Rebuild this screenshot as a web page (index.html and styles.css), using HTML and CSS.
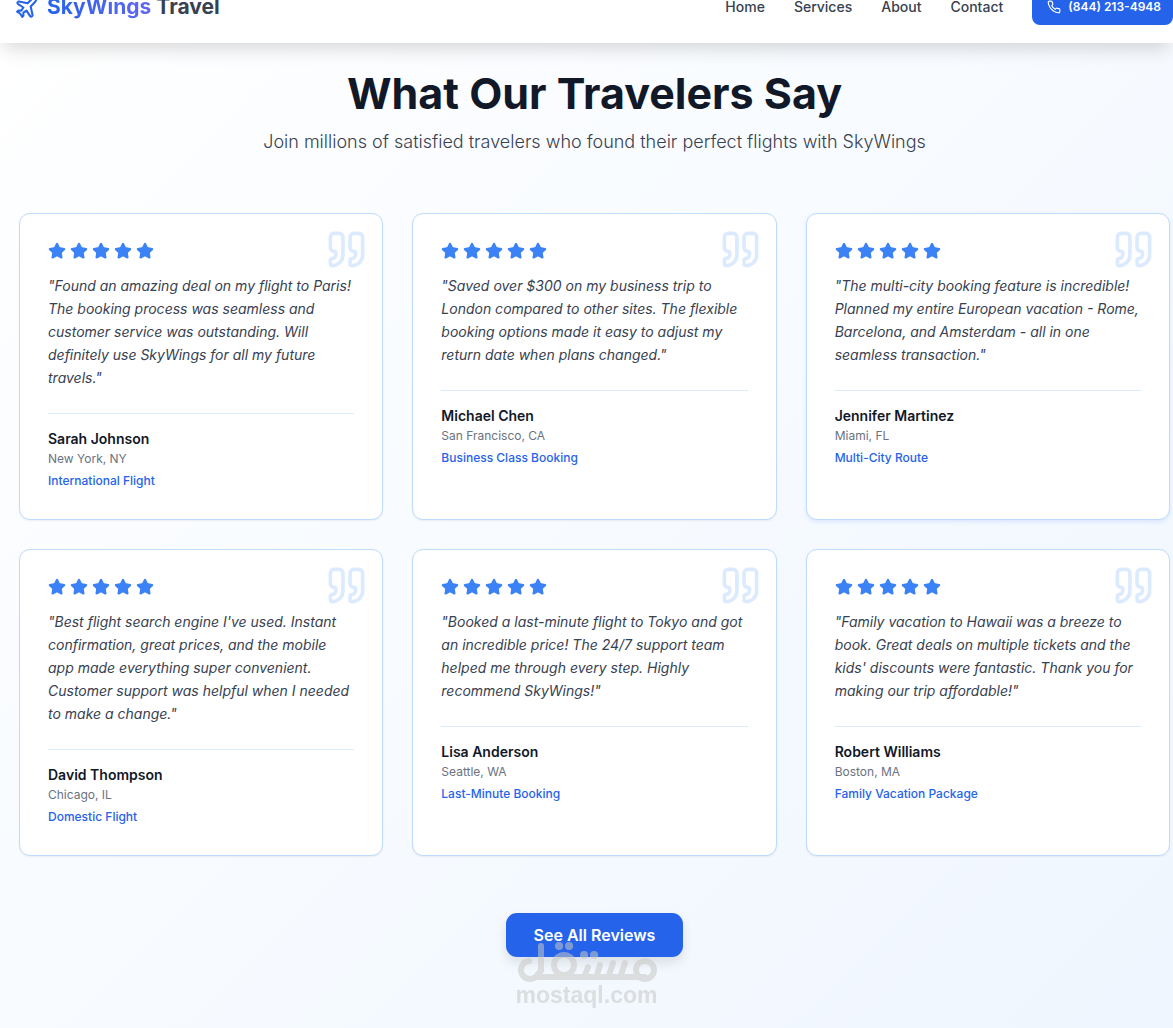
FILE: index.html
```html
<!DOCTYPE html>
<html lang="en">
<head>
  <meta charset="UTF-8">
  <title>SkyWings Travel</title>
  <link rel="stylesheet" href="styles.css">
</head>
<body>
  <header class="header">
    <a class="logo" href="#">
      <svg class="logo-icon" viewBox="0 0 24 24"><path d="M17.8 19.2 16 11l3.5-3.5C21 6 21.5 4 21 3c-1-.5-3 0-4.5 1.5L13 8 4.8 6.2c-.5-.1-.9.1-1.1.5l-.3.5c-.2.5-.1 1 .3 1.3L9 12l-2 3H4l-1 1 3 2 2 3 1-1v-3l3-2 3.5 5.3c.3.4.8.5 1.3.3l.5-.2c.4-.3.6-.7.5-1.2z"/></svg>
      <span><span class="logo-brand">SkyWings</span> Travel</span>
    </a>
    <nav class="nav">
      <a href="#">Home</a>
      <a href="#">Services</a>
      <a href="#">About</a>
      <a href="#">Contact</a>
      <a class="phone" href="tel:8442134948">
        <svg class="phone-icon" viewBox="0 0 24 24"><path d="M22 16.92v3a2 2 0 0 1-2.18 2 19.79 19.79 0 0 1-8.63-3.07 19.5 19.5 0 0 1-6-6 19.79 19.79 0 0 1-3.07-8.67A2 2 0 0 1 4.11 2h3a2 2 0 0 1 2 1.72 12.84 12.84 0 0 0 .7 2.81 2 2 0 0 1-.45 2.11L8.09 9.91a16 16 0 0 0 6 6l1.27-1.27a2 2 0 0 1 2.11-.45 12.84 12.84 0 0 0 2.81.7A2 2 0 0 1 22 16.92z"/></svg>
        (844) 213-4948
      </a>
    </nav>
  </header>

  <svg class="sprite">
    <symbol id="star" viewBox="0 0 24 24"><path d="M11.525 2.295a.53.53 0 0 1 .95 0l2.31 4.679a2.123 2.123 0 0 0 1.595 1.16l5.166.756a.53.53 0 0 1 .294.904l-3.736 3.638a2.123 2.123 0 0 0-.611 1.878l.882 5.14a.53.53 0 0 1-.771.56l-4.618-2.428a2.122 2.122 0 0 0-1.973 0L6.396 21.01a.53.53 0 0 1-.77-.56l.881-5.139a2.122 2.122 0 0 0-.611-1.879L2.16 9.795a.53.53 0 0 1 .294-.906l5.165-.755a2.122 2.122 0 0 0 1.597-1.16z"/></symbol>
    <symbol id="quote" viewBox="0 0 24 24"><path d="M16 3a2 2 0 0 0-2 2v6a2 2 0 0 0 2 2 1 1 0 0 1 1 1v1a2 2 0 0 1-2 2 1 1 0 0 0-1 1v2a1 1 0 0 0 1 1 6 6 0 0 0 6-6V5a2 2 0 0 0-2-2z"/><path d="M5 3a2 2 0 0 0-2 2v6a2 2 0 0 0 2 2 1 1 0 0 1 1 1v1a2 2 0 0 1-2 2 1 1 0 0 0-1 1v2a1 1 0 0 0 1 1 6 6 0 0 0 6-6V5a2 2 0 0 0-2-2z"/></symbol>
  </svg>

  <main class="reviews">
    <h1>What Our Travelers Say</h1>
    <p class="subtitle">Join millions of satisfied travelers who found their perfect flights with SkyWings</p>

    <div class="grid">
      <article class="card">
        <svg class="quote"><use href="#quote"/></svg>
        <div class="stars"><svg><use href="#star"/></svg><svg><use href="#star"/></svg><svg><use href="#star"/></svg><svg><use href="#star"/></svg><svg><use href="#star"/></svg></div>
        <p class="text">"Found an amazing deal on my flight to Paris! The booking process was seamless and customer service was outstanding. Will definitely use SkyWings for all my future travels."</p>
        <div class="author">
          <h2>Sarah Johnson</h2>
          <p class="city">New York, NY</p>
          <p class="trip">International Flight</p>
        </div>
      </article>
      <article class="card">
        <svg class="quote"><use href="#quote"/></svg>
        <div class="stars"><svg><use href="#star"/></svg><svg><use href="#star"/></svg><svg><use href="#star"/></svg><svg><use href="#star"/></svg><svg><use href="#star"/></svg></div>
        <p class="text">"Saved over $300 on my business trip to London compared to other sites. The flexible booking options made it easy to adjust my return date when plans changed."</p>
        <div class="author">
          <h2>Michael Chen</h2>
          <p class="city">San Francisco, CA</p>
          <p class="trip">Business Class Booking</p>
        </div>
      </article>
      <article class="card card-active">
        <svg class="quote"><use href="#quote"/></svg>
        <div class="stars"><svg><use href="#star"/></svg><svg><use href="#star"/></svg><svg><use href="#star"/></svg><svg><use href="#star"/></svg><svg><use href="#star"/></svg></div>
        <p class="text">"The multi-city booking feature is incredible! Planned my entire European vacation - Rome, Barcelona, and Amsterdam - all in one seamless transaction."</p>
        <div class="author">
          <h2>Jennifer Martinez</h2>
          <p class="city">Miami, FL</p>
          <p class="trip">Multi-City Route</p>
        </div>
      </article>
      <article class="card">
        <svg class="quote"><use href="#quote"/></svg>
        <div class="stars"><svg><use href="#star"/></svg><svg><use href="#star"/></svg><svg><use href="#star"/></svg><svg><use href="#star"/></svg><svg><use href="#star"/></svg></div>
        <p class="text">"Best flight search engine I've used. Instant confirmation, great prices, and the mobile app made everything super convenient. Customer support was helpful when I needed to make a change."</p>
        <div class="author">
          <h2>David Thompson</h2>
          <p class="city">Chicago, IL</p>
          <p class="trip">Domestic Flight</p>
        </div>
      </article>
      <article class="card">
        <svg class="quote"><use href="#quote"/></svg>
        <div class="stars"><svg><use href="#star"/></svg><svg><use href="#star"/></svg><svg><use href="#star"/></svg><svg><use href="#star"/></svg><svg><use href="#star"/></svg></div>
        <p class="text">"Booked a last-minute flight to Tokyo and got an incredible price! The 24/7 support team helped me through every step. Highly recommend SkyWings!"</p>
        <div class="author">
          <h2>Lisa Anderson</h2>
          <p class="city">Seattle, WA</p>
          <p class="trip">Last-Minute Booking</p>
        </div>
      </article>
      <article class="card">
        <svg class="quote"><use href="#quote"/></svg>
        <div class="stars"><svg><use href="#star"/></svg><svg><use href="#star"/></svg><svg><use href="#star"/></svg><svg><use href="#star"/></svg><svg><use href="#star"/></svg></div>
        <p class="text">"Family vacation to Hawaii was a breeze to book. Great deals on multiple tickets and the kids' discounts were fantastic. Thank you for making our trip affordable!"</p>
        <div class="author">
          <h2>Robert Williams</h2>
          <p class="city">Boston, MA</p>
          <p class="trip">Family Vacation Package</p>
        </div>
      </article>
    </div>

    <div class="more">
      <button class="more-button" type="button">See All Reviews</button>
      <div class="watermark">
        <svg class="watermark-mark" viewBox="0 0 142 42">
          <path d="M13 20a9 9 0 1 0 9 13L25 30V5"/>
          <path d="M20 36H129"/>
          <circle cx="48" cy="24" r="10"/>
          <path d="M72 26 69 34M84 24 81 34M97 22 93 34M109 22 105 34"/>
          <circle cx="129" cy="29" r="9"/>
          <path class="dots" d="M43 5h.1M53 5h.1M68 14h.1M78 14h.1"/>
        </svg>
        <span>mostaql.com</span>
      </div>
    </div>
  </main>
</body>
</html>
```
FILE: styles.css
```css
* {
  box-sizing: border-box;
}
body {
  margin: 0;
  min-height: 100vh;
  overflow: hidden;
  font-family: Inter, "Open Sans", sans-serif;
  color: #111827;
  background: linear-gradient(135deg, #ffffff, #eff6ff);
}
h1, h2, p {
  margin: 0;
}
a {
  color: inherit;
  text-decoration: none;
}
svg {
  fill: none;
  stroke: currentColor;
  stroke-width: 2;
  stroke-linecap: round;
  stroke-linejoin: round;
}
.sprite {
  display: none;
}

/* header */
.header {
  position: relative;
  display: flex;
  justify-content: space-between;
  align-items: center;
  height: 72px;
  margin-top: -29px;
  padding-left: 14px;
  background: #fff;
  box-shadow: 0 9px 18px -4px rgba(0, 0, 0, 0.16);
}
.logo {
  display: flex;
  align-items: center;
  gap: 8px;
  font-size: 21px;
  line-height: 28px;
  font-weight: 700;
  color: #374151;
}
.logo-icon {
  width: 25px;
  height: 25px;
  color: #2563eb;
}
.logo-brand {
  color: transparent;
  background: linear-gradient(90deg, #2563eb, #6366f1);
  background-clip: text;
}
.nav {
  display: flex;
  align-items: center;
  gap: 29px;
  font-size: 14px;
  line-height: 20px;
  font-weight: 500;
  color: #374151;
}
.phone {
  display: flex;
  align-items: center;
  gap: 7px;
  height: 36px;
  padding: 0 12px 0 15px;
  border-radius: 8px;
  font-size: 12px;
  font-weight: 600;
  color: #fff;
  background: #2563eb;
}
.phone-icon {
  width: 14px;
  height: 14px;
}

/* reviews */
.reviews {
  padding: 22px 3px 29px 19px;
  text-align: center;
}
h1 {
  font-size: 43px;
  line-height: 56px;
  font-weight: 700;
}
.subtitle {
  margin-top: 7px;
  font-size: 18px;
  line-height: 28px;
  font-weight: 300;
  color: #374151;
}
.grid {
  display: grid;
  grid-template-columns: repeat(3, 1fr);
  gap: 29px;
  margin-top: 57px;
  text-align: left;
}
.card {
  position: relative;
  min-height: 307px;
  padding: 28px;
  border: 1px solid #bfdbfe;
  border-radius: 11px;
  background: #fff;
  box-shadow: 0 1px 2px rgba(0, 0, 0, 0.06);
}
.card-active {
  box-shadow: 0 2px 4px rgba(37, 99, 235, 0.12);
}
.quote {
  position: absolute;
  top: 14px;
  right: 14px;
  width: 43px;
  height: 43px;
  color: #dbeafe;
}
.stars {
  display: flex;
  gap: 4px;
  height: 18px;
  margin-bottom: 14px;
}
.stars svg {
  width: 18px;
  height: 18px;
  color: #3b82f6;
  fill: #3b82f6;
}
.text {
  font-size: 14px;
  line-height: 23px;
  font-style: italic;
  color: #374151;
}
.author {
  margin-top: 24px;
  padding-top: 14px;
  border-top: 1px solid #dbeafe;
}
.author h2 {
  font-size: 14px;
  line-height: 21px;
  font-weight: 600;
}
.city {
  font-size: 12px;
  line-height: 20px;
  color: #6b7280;
}
.trip {
  margin-top: 2px;
  font-size: 12px;
  line-height: 20px;
  font-weight: 500;
  color: #2563eb;
}

/* button */
.more {
  position: relative;
  display: flex;
  justify-content: center;
  margin-top: 57px;
}
.more-button {
  padding: 0 28px;
  height: 44px;
  border: none;
  border-radius: 11px;
  font-family: inherit;
  font-size: 16px;
  font-weight: 600;
  color: #fff;
  background: #2563eb;
  box-shadow: 0 6px 12px rgba(0, 0, 0, 0.1);
  cursor: pointer;
}
.watermark {
  position: absolute;
  top: 28px;
  left: 50%;
  width: 142px;
  margin-left: -79px;
  font-family: "Liberation Sans", sans-serif;
  font-size: 23px;
  line-height: 24px;
  font-weight: 700;
  color: #c8c8c4;
  opacity: 0.55;
}
.watermark-mark {
  display: block;
  width: 142px;
  height: 42px;
  stroke-width: 6;
}
.dots {
  stroke-width: 8;
}
```
